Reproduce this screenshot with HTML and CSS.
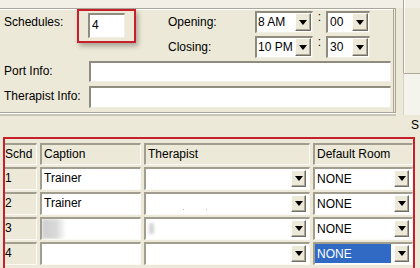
FILE: index.html
```html
<!DOCTYPE html>
<html lang="en">
<head>
  <meta charset="UTF-8" />
  <title>Schedules</title>
  <link rel="stylesheet" href="styles.css">
</head>
<body>

  <!-- Top settings frame -->
  <div class="top">
    <div class="frame">
      <div class="sched">
        <div class="sched-left">
          <span class="lbl sched-lbl">Schedules:</span>
          <div class="callout">
            <div class="field num">4</div>
          </div>
        </div>
        <div class="times">
          <div class="time-row">
            <span class="lbl time-lbl">Opening:</span>
            <div class="combo hour"><span class="val">8 AM</span><span class="btn"></span></div>
            <span class="colon">:</span>
            <div class="combo min"><span class="val">00</span><span class="btn"></span></div>
          </div>
          <div class="time-row">
            <span class="lbl time-lbl">Closing:</span>
            <div class="combo hour"><span class="val">10 PM</span><span class="btn"></span></div>
            <span class="colon">:</span>
            <div class="combo min"><span class="val">30</span><span class="btn"></span></div>
          </div>
        </div>
      </div>
      <div class="info-row">
        <span class="lbl info-lbl">Port Info:</span>
        <div class="field wide"></div>
      </div>
      <div class="info-row tall">
        <span class="lbl info-lbl">Therapist Info:</span>
        <div class="field wide"></div>
      </div>
    </div>
    <div class="side">
      <div class="side-top"></div>
      <div class="side-bottom"></div>
    </div>
  </div>

  <div class="peek">S</div>

  <!-- Schedule grid -->
  <div class="grid-box">
    <div class="grid">
      <div class="cell head schd">Schd</div>
      <div class="cell head">Caption</div>
      <div class="cell head">Therapist</div>
      <div class="cell head room">Default Room</div>

      <div class="cell schd">1</div>
      <div class="cell white">Trainer</div>
      <div class="cell white combo"><span class="val"></span><span class="btn"></span></div>
      <div class="cell white combo room"><span class="val">NONE</span><span class="btn"></span></div>

      <div class="cell schd">2</div>
      <div class="cell white">Trainer</div>
      <div class="cell white combo"><span class="val"><i class="dot d1"></i><i class="dot d2"></i></span><span class="btn"></span></div>
      <div class="cell white combo room"><span class="val">NONE</span><span class="btn"></span></div>

      <div class="cell schd">3</div>
      <div class="cell white"><span class="blur"></span></div>
      <div class="cell white combo"><span class="val"><span class="blur thin"></span></span><span class="btn"></span></div>
      <div class="cell white combo room"><span class="val">NONE</span><span class="btn"></span></div>

      <div class="cell schd">4</div>
      <div class="cell white"></div>
      <div class="cell white combo"><span class="val"></span><span class="btn"></span></div>
      <div class="cell white combo room"><span class="val sel">NONE</span><span class="btn"></span></div>
    </div>
  </div>

</body>
</html>
```

FILE: styles.css
```css
* {
  box-sizing: border-box;
}
body {
  margin: 0;
  width: 420px;
  height: 268px;
  overflow: hidden;
  background: #ece9d8;
  color: #000;
  font-family: "Liberation Sans", Arial, sans-serif;
  font-size: 12px;
}

/* Top frame */
.top {
  display: flex;
  height: 117px;
  background: linear-gradient(#f2f0e6 0 8px, #ece9d8 8px);
}
.frame {
  margin-top: 8px;
  width: 396px;
  height: 105px;
  border-top: 1px solid #aca899;
  border-right: 3px double #aca899;
  border-bottom: 1px solid #aca899;
  box-shadow: inset 0 1px #fff, 0 1px #fff, 0 3px #c9c6b8;
  display: flex;
  flex-direction: column;
}
.side {
  flex: 1;
  margin-left: 7px;
  display: flex;
  flex-direction: column;
}
.side-top {
  height: 73px;
  border-left: 1px solid #aca899;
  box-shadow: inset 1px 0 #fff;
}
.side-bottom {
  height: 42px;
  border-top: 1px solid #aca899;
  border-left: 1px solid #d6d3c6;
  background: #f4f3ec;
}

.lbl {
  white-space: nowrap;
}
.sched {
  display: flex;
  height: 53px;
}
.sched-left {
  display: flex;
  align-items: flex-start;
  width: 168px;
}
.sched-lbl {
  width: 77px;
  padding-left: 4px;
  margin-top: 1px;
  line-height: 25px;
}
.callout {
  width: 59px;
  height: 34px;
  padding: 2px 9px 3px;
  border: 2px solid #c8202a;
  box-shadow: 2px 3px 5px rgba(0, 0, 0, 0.3);
}

.field {
  background: #fff;
  border-top: 2px solid #8f8c7f;
  border-left: 2px solid #8f8c7f;
  border-right: 1px solid #f1efe2;
  border-bottom: 1px solid #f1efe2;
}
.num {
  width: 37px;
  height: 25px;
  padding-left: 2px;
  line-height: 20px;
}

.times {
  display: flex;
  flex-direction: column;
  gap: 3px;
  padding-top: 2px;
}
.time-row {
  display: flex;
  height: 22px;
}
.time-lbl {
  width: 87px;
  line-height: 22px;
}
.colon {
  width: 13px;
  text-align: center;
  line-height: 12px;
}

.combo {
  display: flex;
  background: #fff;
  border-top: 2px solid #8f8c7f;
  border-left: 2px solid #8f8c7f;
  border-right: 1px solid #f1efe2;
  border-bottom: 1px solid #f1efe2;
}
.combo .val {
  flex: 1;
  overflow: hidden;
  white-space: nowrap;
  padding-left: 1px;
  line-height: 19px;
}
.hour {
  width: 58px;
}
.min {
  width: 44px;
}
.min .val {
  padding-left: 2px;
}
.btn {
  width: 16px;
  margin: 0 1px 1px 0;
  display: flex;
  align-items: center;
  justify-content: center;
  background: #ece9d8;
  border-top: 1px solid #fff;
  border-left: 1px solid #fff;
  border-right: 1px solid #716f64;
  border-bottom: 1px solid #716f64;
  box-shadow: inset -1px -1px #aca899;
}
.btn::after {
  content: '';
  border-left: 4.5px solid transparent;
  border-right: 4.5px solid transparent;
  border-top: 5px solid #000;
}

.info-row {
  display: flex;
  height: 21px;
  margin-bottom: 4px;
}
.info-row.tall {
  height: 22px;
}
.info-lbl {
  width: 89px;
  padding-left: 4px;
  line-height: 21px;
}
.wide {
  width: 302px;
}

.peek {
  height: 20px;
  padding: 1px 0 0 411px;
  line-height: 14px;
  overflow: hidden;
}

/* Grid */
.grid-box {
  width: 412px;
  height: 140px;
  margin-left: 3px;
  padding-top: 4px;
  border: 2px solid #c8202a;
}
.grid {
  display: grid;
  grid-template-columns: 32px 101px 166px 100px;
  grid-template-rows: 22px repeat(4, 23px);
  column-gap: 3px;
  row-gap: 2px;
}
.cell {
  padding-left: 2px;
  line-height: 19px;
  white-space: nowrap;
  overflow: hidden;
  border-top: 2px solid #a19e90;
  border-left: 2px solid #a19e90;
  border-right: 1px solid #fbfaf4;
  border-bottom: 1px solid #fbfaf4;
}
.cell.schd {
  border-left: none;
  padding-left: 0;
}
.cell.white {
  background: #fff;
}
.cell.combo {
  padding-left: 0;
}
.cell.combo .btn {
  width: 15px;
  margin: 1px 3px 2px 0;
}
.cell.combo .val {
  padding-left: 2px;
  margin-right: 3px;
  line-height: 20px;
  position: relative;
}
.cell.room .val {
  padding-left: 2px;
}
.val.sel {
  background: #316ac5;
  color: #fff;
  margin: 0 3px 1px 0;
}

.blur {
  display: block;
  width: 24px;
  height: 20px;
  margin-left: -2px;
  background: linear-gradient(90deg, #cfcfcf, #d9d9d9 60%, #fff);
  filter: blur(1.5px);
}
.blur.thin {
  width: 5px;
  height: 11px;
  margin: 4px 0 0 1px;
  background: #d4d4d4;
}
.dot {
  position: absolute;
  top: 15px;
  width: 1px;
  height: 1px;
  background: #bbb;
}
.d1 {
  left: 37px;
}
.d2 {
  left: 60px;
}
```
